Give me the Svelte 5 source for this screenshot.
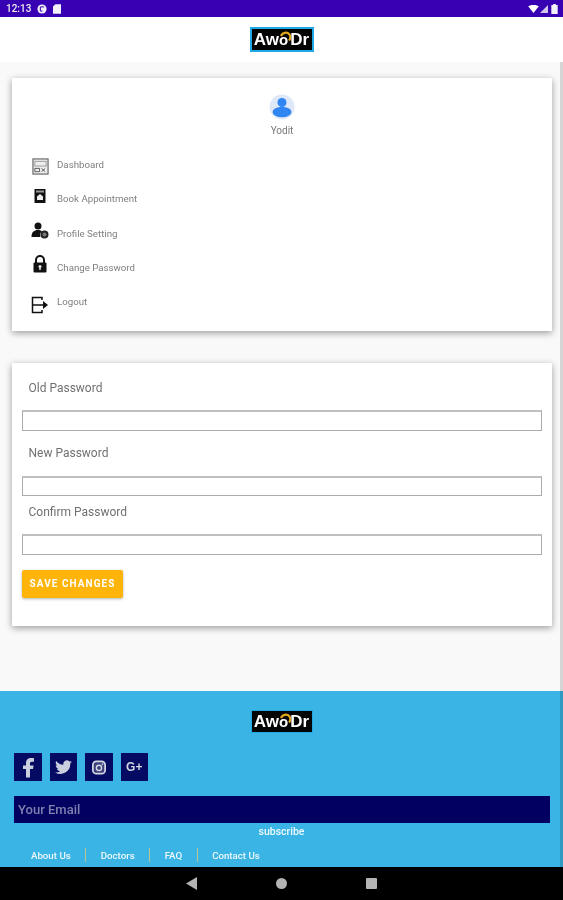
<script>
  const menu = [
    { label: 'Dashboard', icon: 'dash' },
    { label: 'Book Appointment', icon: 'book' },
    { label: 'Profile Setting', icon: 'profile' },
    { label: 'Change Password', icon: 'lock' },
    { label: 'Logout', icon: 'logout' }
  ];
  const links = ['About Us', 'Doctors', 'FAQ', 'Contact Us'];
</script>

{#snippet logo()}
  <span class="logo-text">Aw<span class="logo-o">o<svg class="arc" viewBox="0 0 12 12"><path d="M2 5a5 5 0 0 1 8.500-1.500A5 5 0 0 1 10 9.500" fill="none" stroke="#e2a818" stroke-width="2.200"/></svg></span><span class="logo-dr">Dr</span></span>
{/snippet}

<div class="page">
  <div class="status">
    <span class="time">12:13</span>
    <svg class="st-g" viewBox="0 0 12 12"><circle cx="6" cy="6" r="5.500" fill="#f2f0fa"/><path d="M4 3.500h4.500M4 3.500v5h2.500" stroke="#3700b3" stroke-width="1.200" fill="none"/></svg>
    <svg class="st-sd" viewBox="0 0 10 12"><path d="M3 0h7v12H0V3z" fill="#f2f0fa"/></svg>
    <span class="spacer"></span>
    <svg class="st-wifi" viewBox="0 0 12 9"><path d="M0 1.500C3.500-.5 8.500-.5 12 1.500L6 9z" fill="#fff"/></svg>
    <svg class="st-cell" viewBox="0 0 9 9"><path d="M9 0v9H0z" fill="#cfc6ea"/></svg>
    <svg class="st-bat" viewBox="0 0 7 11"><path d="M2 0h3v1h2v10H0V1h2z" fill="#f2f0fa"/></svg>
  </div>

  <header class="top">
    <div class="logo logo-top">{@render logo()}</div>
  </header>

  <main class="content">
    <section class="card profile">
      <svg class="avatar" viewBox="0 0 26 26">
        <circle cx="13" cy="13" r="12.500" fill="#dfe8f8"/>
        <circle cx="13" cy="8.500" r="4.500" fill="#2f86f2"/>
        <ellipse cx="13" cy="18" rx="9.500" ry="5.200" fill="#2f86f2"/>
      </svg>
      <div class="name">Yodit</div>
      <ul class="menu">
        {#each menu as m}
          <li class="row">
            <span class="ico {m.icon}">
              {#if m.icon === 'dash'}
                <svg viewBox="0 0 18 18" width="17" height="17"><rect x="1" y="1" width="16" height="16" fill="#eee" stroke="#555" stroke-width="1.100"/><rect x="3" y="3.500" width="12" height="5" fill="none" stroke="#999"/><path d="M3 11h5v3.500H3z" fill="none" stroke="#555"/><path d="M10 11l4 3.500M14 11l-4 3.500" stroke="#555"/></svg>
              {:else if m.icon === 'book'}
                <svg viewBox="0 0 12 16" width="12" height="16"><rect x="0.500" y="1" width="11" height="14" fill="#111"/><rect x="2" y="2.500" width="8" height="2" fill="#999"/><path d="M6 6l3 2.500v3.500H3V8.500z" fill="#eee"/></svg>
              {:else if m.icon === 'profile'}
                <svg viewBox="0 0 18 18" width="18" height="18"><circle cx="7" cy="4" r="3.500" fill="#111"/><path d="M0.500 15c0-5 2.500-7 6.500-7 1.500 0 3 .4 4 1.200-1.500 1-2.500 3.300-1.500 5.800z" fill="#111"/><circle cx="13.500" cy="12.500" r="3" fill="#777" stroke="#222" stroke-width="2"/></svg>
              {:else if m.icon === 'lock'}
                <svg viewBox="0 0 14 18" width="14" height="18"><path d="M3 8V5a4 4 0 0 1 8 0v3" fill="none" stroke="#111" stroke-width="2"/><rect x="0.500" y="7.500" width="13" height="10" rx="1" fill="#111"/><circle cx="7" cy="11.500" r="1.500" fill="#eee"/><rect x="6.300" y="11.500" width="1.400" height="3.500" fill="#eee"/></svg>
              {:else}
                <svg viewBox="0 0 18 18" width="18" height="18"><path d="M11 4V1.500H1.500v15H11V14" fill="none" stroke="#111" stroke-width="1.500"/><path d="M2 9h11" stroke="#111" stroke-width="1.500"/><path d="M12 5l5 4-5 4z" fill="#111"/></svg>
              {/if}
            </span>
            <span class="label">{m.label}</span>
          </li>
        {/each}
      </ul>
    </section>

    <section class="card form">
      <div class="flabel first">Old Password</div>
      <div class="input"></div>
      <div class="flabel second">New Password</div>
      <div class="input short"></div>
      <div class="flabel third">Confirm Password</div>
      <div class="input"></div>
      <div class="btn">SAVE CHANGES</div>
    </section>
  </main>

  <footer class="foot">
    <div class="logo logo-foot">{@render logo()}</div>
    <div class="social">
      <span class="sq"><svg viewBox="0 0 16 20" width="16" height="21"><path d="M10 20v-8.500h3l.6-3.500H10V6c0-1.100.5-1.800 2-1.800h2V.8C13.300.6 12.300.5 11.200.5 8 .5 6 2.400 6 5.500V8H3v3.500h3V20z" fill="#c9cfdc"/></svg></span>
      <span class="sq"><svg viewBox="0 0 24 20" width="17" height="15"><path d="M24 2.400c-.9.400-1.800.7-2.800.8 1-.6 1.800-1.600 2.200-2.700-1 .6-2 1-3.100 1.200A4.900 4.900 0 0 0 11.900 6.200C7.800 6 4.200 4 1.700.9c-1.300 2.200-.7 5 1.500 6.500-.8 0-1.500-.2-2.200-.6 0 2.400 1.700 4.400 3.900 4.900-.7.200-1.500.2-2.200.1.600 2 2.400 3.400 4.600 3.400A9.900 9.900 0 0 1 0 16.900 14 14 0 0 0 21.500 4.500c1-.6 1.800-1.300 2.500-2.100z" fill="#c9cfdc"/></svg></span>
      <span class="sq"><svg viewBox="0 0 16 16" width="14" height="15"><rect x="1" y="1" width="14" height="14" rx="4" fill="#3a3f7c" stroke="#d4d7e2" stroke-width="2"/><circle cx="8" cy="8.500" r="3" fill="none" stroke="#d4d7e2" stroke-width="1.600"/><circle cx="12" cy="4" r="1" fill="#d4d7e2"/></svg></span>
      <span class="sq gp">G+</span>
    </div>
    <div class="email">Your Email</div>
    <div class="sub">subscribe</div>
    <nav class="links">
      {#each links as l, i}
        {#if i > 0}<span class="sep"></span>{/if}
        <span class="lnk">{l}</span>
      {/each}
    </nav>
  </footer>

  <div class="navbar">
    <svg class="nav-back" viewBox="0 0 11 13"><path d="M11 0v13L0 6.500z" fill="#b4b4b4"/></svg>
    <span class="nav-home"></span>
    <span class="nav-rec"></span>
  </div>
  <span class="scroll"></span>
</div>

<style>
  :global(body) { margin: 0; background: #fafafa; }
  .page {
    position: relative;
    width: 563px;
    height: 900px;
    overflow: hidden;
    display: flex;
    flex-direction: column;
    font-family: Roboto, "Liberation Sans", sans-serif;
    filter: blur(0.5px);
  }
  .status {
    height: 17px;
    background: #3700b3;
    display: flex;
    align-items: center;
    padding: 0 5px 0 6px;
    box-sizing: border-box;
    color: #eee;
  }
  .time { font-size: 10px; font-weight: 500; width: 28px; margin-right: 3px; }
  .st-g { width: 10px; height: 10px; margin-right: 6px; }
  .st-sd { width: 8px; height: 10px; }
  .spacer { flex: 1; }
  .st-wifi { width: 11px; height: 8px; margin-right: 1px; }
  .st-cell { width: 8px; height: 8px; margin-right: 3px; }
  .st-bat { width: 7px; height: 10px; }
  .top {
    height: 45px;
    background: #fff;
    display: flex;
    align-items: center;
    justify-content: center;
  }
  .logo {
    background: #050505;
    display: flex;
    align-items: center;
    justify-content: center;
    box-sizing: border-box;
  }
  .logo-top { width: 64px; height: 25px; border: 2px solid #1ea8e6; }
  .logo-foot { width: 62px; height: 23px; border: 1px solid #1ea8e6; }
  .logo-text {
    color: #fff;
    font: 700 17px/1 "Liberation Sans", Arial, sans-serif;
    white-space: nowrap;
    display: flex;
    align-items: center;
  }
  .logo-o { position: relative; font-size: 15px; }
  .arc { position: absolute; left: 0; top: -1px; width: 12px; height: 12px; }
  .logo-dr { margin-left: 2px; }
  .content { height: 629px; background: #f9f9f9; padding: 16px 11px 0 12px; box-sizing: border-box; }
  .card {
    background: #fff;
    box-shadow: 0 2px 7px rgba(0, 0, 0, 0.38);
    box-sizing: border-box;
  }
  .profile { height: 253px; padding-top: 16px; display: flex; flex-direction: column; align-items: center; }
  .avatar { width: 26px; height: 26px; display: block; }
  .name { font-size: 10px; color: #777; line-height: 12px; margin-top: 5px; }
  .menu { list-style: none; margin: 10.500px 0 0; padding: 0; align-self: stretch; }
  .row { height: 34.300px; display: flex; align-items: center; padding-left: 19px; }
  .ico { width: 18px; height: 18px; margin-right: 8px; display: flex; align-items: center; justify-content: center; flex: none; }
  .ico.dash { margin-top: 4px; }
  .ico.book { margin-top: -6px; }
  .ico.profile { margin-top: -20px; }
  .ico.lock { margin-top: -8px; }
  .ico.logout { margin-top: 6px; }
  .label { font-size: 9.700px; color: #808080; }
  .form { height: 263px; margin-top: 32px; padding: 0 10px; }
  .flabel { font-size: 12px; line-height: 14px; color: #707070; padding-left: 6.500px; }
  .first { padding-top: 18px; margin-bottom: 15px; }
  .second { margin-top: 15px; margin-bottom: 16px; }
  .third { margin-top: 9px; margin-bottom: 15px; }
  .input { height: 21px; border: 1px solid #ababab; border-top: 2px solid #c0c0c0; box-sizing: border-box; background: #fff; }
  .input.short { height: 20px; }
  .btn {
    width: 101px;
    height: 28px;
    margin-top: 15px;
    padding-bottom: 1px;
    box-sizing: border-box;
    background: #ffb40a;
    border-radius: 2px;
    color: #fff;
    font-size: 10px;
    font-weight: 700;
    letter-spacing: 1.050px;
    display: flex;
    align-items: center;
    justify-content: center;
    box-shadow: 0 1px 3px rgba(0, 0, 0, 0.3);
  }
  .foot { height: 176px; background: #3ab4e4; display: flex; flex-direction: column; align-items: center; padding-top: 19px; box-sizing: border-box; }
  .social { align-self: flex-start; display: flex; gap: 8px; margin: 20px 0 0 14px; }
  .sq { width: 27.500px; height: 28px; background: #050a63; display: flex; align-items: center; justify-content: center; }
  .gp { color: #d4d7e2; font: 700 12px "Liberation Sans", sans-serif; }
  .email {
    align-self: flex-start;
    margin: 15px 0 0 14px;
    width: 536px;
    height: 27px;
    line-height: 27px;
    background: #020060;
    color: #8080b0;
    font-size: 13px;
    font-weight: 500;
    padding-left: 4px;
    box-sizing: border-box;
  }
  .sub { color: #eef9fe; font-size: 10.500px; font-weight: 500; line-height: 14px; margin-top: 2px; }
  .links { align-self: flex-start; display: flex; align-items: center; margin: 9px 0 0 31px; color: #eef9fe; font-size: 9.700px; font-weight: 500; }
  .sep { width: 1px; height: 14px; background: #b9c48f; margin: 0 14.500px; }
  .lnk { white-space: nowrap; }
  .navbar { height: 33px; background: #000; position: relative; }
  .nav-back { width: 11px; height: 13px; position: absolute; left: 186px; top: 10px; }
  .nav-home { width: 11px; height: 11px; border-radius: 50%; background: #b4b4b4; position: absolute; left: 276px; top: 11px; }
  .nav-rec { width: 11px; height: 11px; border-radius: 1px; background: #b4b4b4; position: absolute; left: 366px; top: 11px; }
  .scroll { position: absolute; right: 0; top: 62px; width: 3px; height: 805px; background: rgba(0, 0, 0, 0.14); }
</style>
